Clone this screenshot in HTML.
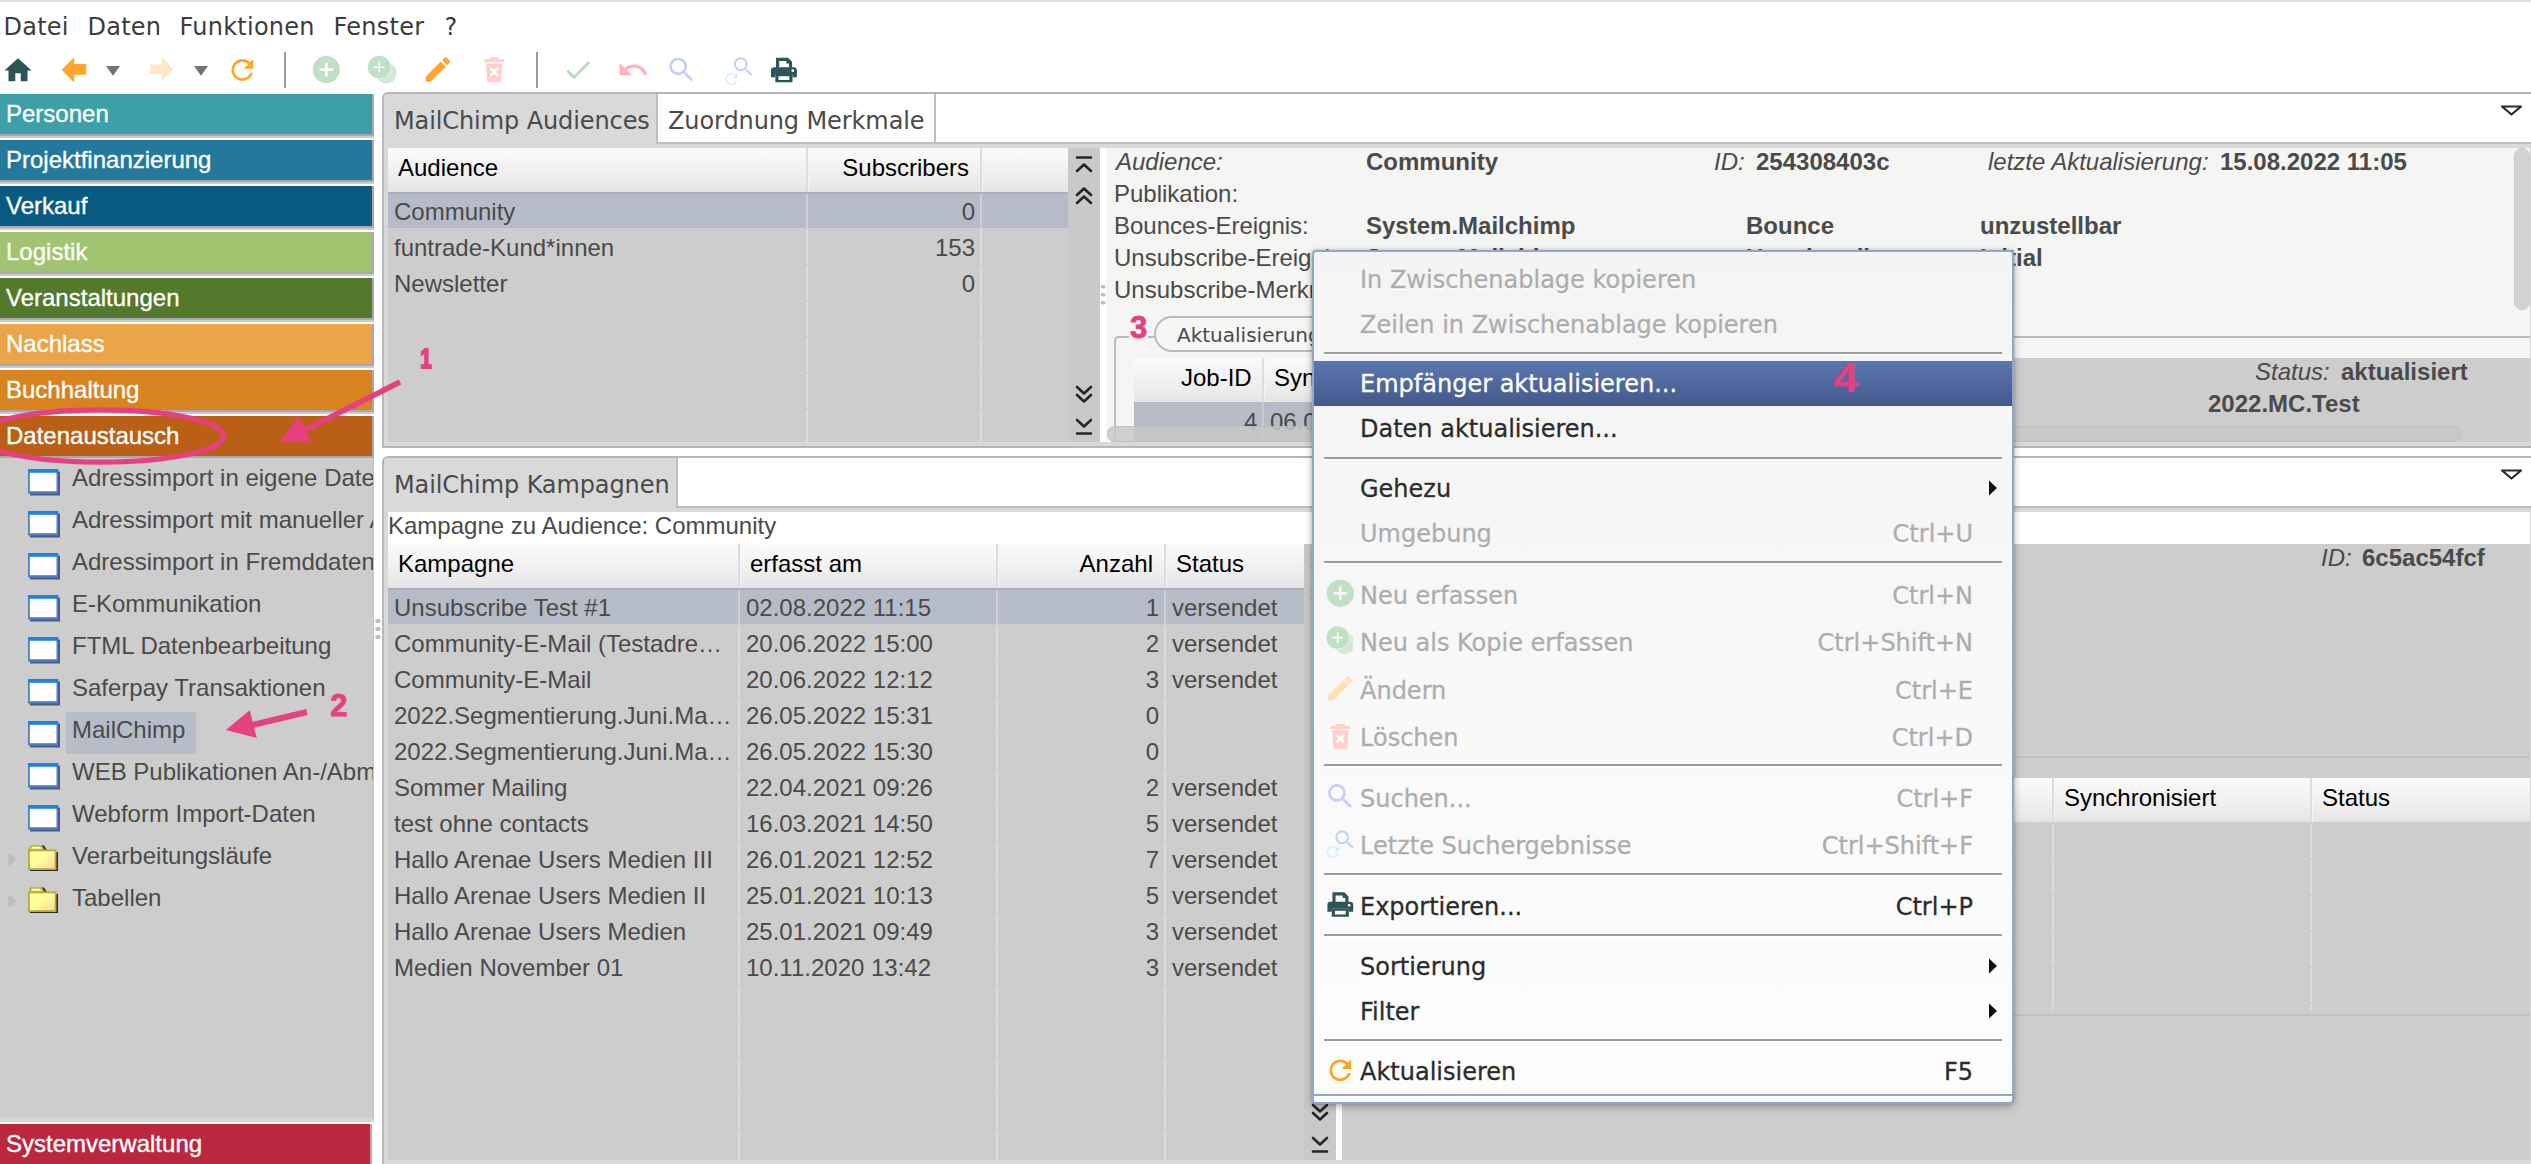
<!DOCTYPE html>
<html lang="de">
<head>
<meta charset="utf-8">
<title>MailChimp</title>
<style>
*{box-sizing:border-box;margin:0;padding:0}
html,body{width:2531px;height:1164px;overflow:hidden;background:#fff}
body{position:relative;font-family:"Liberation Sans",sans-serif;font-size:24px;color:#4a4a4a}
.abs{position:absolute}
.dj{font-family:"DejaVu Sans","Liberation Sans",sans-serif}
.t{position:absolute;white-space:nowrap;line-height:28px;height:28px}
#topline{left:0;top:0;width:2531px;height:2px;background:#dddee1}
.menu{top:13px;font-size:24px;color:#3c3c3c;letter-spacing:.25px;margin-left:-.5px}
/* sidebar */
#side{left:0;top:94px;width:374px;height:1070px;background:#fff}
.bar{position:absolute;left:0;width:374px;height:42px;border-right:2px solid #aaa8ab;border-bottom:2px solid #a9a8ab;box-shadow:0 2px 0 #cbcbcb}
.bar span{position:absolute;left:6px;top:6px;-webkit-text-stroke:.35px #fff;color:#fff;font-size:24px;line-height:28px;white-space:nowrap}
#tree{left:0;top:458px;width:374px;height:660px;background:#cdcdcd;overflow:hidden;border-right:1px solid #c3c3c3}
.ti{position:absolute;left:72px;font-size:24px;line-height:28px;color:#4a4a4a;white-space:nowrap}
.wi{position:absolute;left:28px;width:32px;height:26.5px}

/* panels */
.panel{position:absolute;background:#d9d9d9;border:2px solid #b6b6b6;border-right:none;border-radius:6px 0 0 0}
.tabrow{position:absolute;left:0;top:0;right:0;height:48px;background:#fff;border-bottom:2px solid #bdbdbd}
.tab{position:absolute;top:0;height:50px;font-family:"DejaVu Sans",sans-serif;font-size:24px;line-height:28px;color:#4a4a4a;white-space:nowrap;padding:13px 0 0 10px;letter-spacing:-.1px}
.tab.act{background:#d9d9d9;border-right:2px solid #bdbdbd;border-radius:4px 0 0 0}
.tab.in{background:#fff;border-right:2px solid #bdbdbd;height:48px}
.th{position:absolute;background:linear-gradient(#fbfbfb,#f1f1f1 50%,#e5e5e5);color:#000;height:44px}
.th span{position:absolute;top:6px;font-size:24px;line-height:28px;white-space:nowrap}
.th i{position:absolute;top:0;width:2px;height:44px;background:#dddddd;box-shadow:1px 0 0 #f4f4f4}
.tb{position:absolute;background:#cdcdcd;overflow:hidden}
.tb:after{content:"";position:absolute;left:0;right:0;top:0;height:2px;background:linear-gradient(rgba(0,0,0,.1),rgba(0,0,0,.03))}
.row{position:absolute;left:0;right:0;height:36px}
.row.sel{background:#b6bcc7}
.row span{position:absolute;top:6px;font-size:24px;line-height:28px;white-space:nowrap;color:#4a4a4a}
.vl{position:absolute;top:0;bottom:0;width:2px;background:repeating-linear-gradient(transparent 0,transparent 2px,rgba(255,255,255,.3) 2px,rgba(255,255,255,.3) 36px)}
.nav{position:absolute;background:#c9c9c9;width:32px}
.lbl{position:absolute;font-size:24px;line-height:28px;white-space:nowrap;color:#4a4a4a}
.lbl.i{font-style:italic}
.lbl.b{font-weight:bold}

/* context menu */
#cm{position:absolute;left:1312px;top:250px;width:702px;height:854px;border:2px solid #91a6c8;border-radius:4px 4px 5px 5px;background:linear-gradient(#f4f4f4,#f7f7f7 40%,#fdfdfd);box-shadow:0 3px 8px rgba(0,0,0,.28),0 0 3px rgba(0,0,0,.2);font-family:"DejaVu Sans",sans-serif;font-size:24px;-webkit-text-stroke:.3px}
#cm .mi{position:absolute;left:46px;line-height:28px;height:28px;white-space:nowrap;color:#2c2c2c;text-shadow:0 2px 0 #fff}
#cm .mi.d{color:#adadad}
#cm .sc{position:absolute;right:39px;line-height:28px;height:28px;white-space:nowrap;color:#2c2c2c;text-shadow:0 2px 0 #fff}
#cm .sc.d{color:#adadad}
#cm .sep{position:absolute;left:10px;width:678px;height:2px;background:#9c9c9c;box-shadow:0 2px 0 #fff}
#cm .hl{position:absolute;left:0;width:698px;top:109px;height:45px;background:linear-gradient(#5b76ae,#50689f 50%,#44598c)}
#cm .ar{position:absolute;left:673.5px;width:10px;height:16px}
#cm .ic{position:absolute;left:9.7px;width:32.6px;height:32.6px;margin-top:1px}
</style>
</head>
<body>
<svg width="0" height="0" style="position:absolute"><defs>
<symbol id="i-add" viewBox="0 0 24 24"><path d="M12 2C6.48 2 2 6.48 2 12s4.48 10 10 10 10-4.48 10-10S17.52 2 12 2zm5 11h-4v4h-2v-4H7v-2h4V7h2v4h4v2z"/></symbol>
<symbol id="i-edit" viewBox="0 0 24 24"><path d="M3 17.25V21h3.75L17.81 9.94l-3.75-3.75L3 17.25zM20.71 7.04c.39-.39.39-1.02 0-1.41l-2.34-2.34c-.39-.39-1.02-.39-1.41 0l-1.83 1.83 3.75 3.75 1.83-1.83z"/></symbol>
<symbol id="i-search" viewBox="0 0 24 24"><path d="M15.5 14h-.79l-.28-.27C15.41 12.59 16 11.11 16 9.5 16 5.91 13.09 3 9.5 3S3 5.91 3 9.5 5.91 16 9.5 16c1.61 0 3.09-.59 4.23-1.57l.27.28v.79l5 4.99L20.49 19l-4.99-5zm-6 0C7.01 14 5 11.99 5 9.5S7.01 5 9.5 5 14 7.01 14 9.5 11.99 14 9.5 14z"/></symbol>
<symbol id="i-refresh" viewBox="0 0 24 24"><path d="M17.65 6.35C16.2 4.9 14.21 4 12 4c-4.42 0-7.99 3.58-7.99 8s3.57 8 7.99 8c3.73 0 6.84-2.55 7.73-6h-2.08c-.82 2.33-3.04 4-5.65 4-3.31 0-6-2.69-6-6s2.69-6 6-6c1.66 0 3.14.69 4.22 1.78L13 11h7V4l-2.35 2.35z"/></symbol>
<symbol id="i-addcopy" viewBox="0 0 24 24" style="overflow:visible"><circle cx="17.500" cy="14.500" r="7.700" fill="#d3e8d5"/><circle cx="12.300" cy="10.050" r="8.750" fill="#eef6ef"/><circle cx="12.300" cy="10.050" r="8.250" fill="#c0dfc3"/><path d="M12.300 6.100v7.900M8.350 10.050h7.900" stroke="#fff" stroke-width="1.150" fill="none"/></symbol>
<symbol id="i-trash" viewBox="0 0 24 24"><path d="M9.2 3.6h5.6l.9 1.5h3.6v2.2H4.7V5.100h3.600zM5.800 8.300h12.400l-.9 12.300c-.06.8-.7 1.400-1.500 1.400H8.200c-.8 0-1.440-.6-1.500-1.400z" fill="#ffd0cc"/><path d="M9.300 11.700l5.400 5.400M14.700 11.700l-5.400 5.400" stroke="#fff" stroke-width="1.900" fill="none"/></symbol>
<symbol id="i-search2" viewBox="0 0 24 24"><path transform="translate(6 0.100) scale(0.78)" d="M15.5 14h-.79l-.28-.27C15.41 12.59 16 11.11 16 9.5 16 5.91 13.09 3 9.5 3S3 5.91 3 9.5 5.91 16 9.5 16c1.61 0 3.09-.59 4.23-1.57l.27.28v.79l5 4.99L20.49 19l-4.99-5zm-6 0C7.01 14 5 11.99 5 9.5S7.01 5 9.5 5 14 7.01 14 9.5 11.99 14 9.5 14z" fill="#c5d0f8"/><path transform="translate(-0.200 11.700) scale(0.56)" d="M17.65 6.35C16.2 4.9 14.21 4 12 4c-4.42 0-7.99 3.58-7.99 8s3.57 8 7.99 8c3.73 0 6.84-2.55 7.73-6h-2.08c-.82 2.33-3.04 4-5.65 4-3.31 0-6-2.69-6-6s2.69-6 6-6c1.66 0 3.14.69 4.22 1.78L13 11h7V4l-2.35 2.35z" fill="#d4eef7"/></symbol>
<symbol id="i-print" viewBox="0 0 24 24"><path d="M6.200 3.200h8.800l3 3v4.300h-2.300V7.400h-1.900V5.500H8.500v5H6.200z"/><path d="M4.500 10.200h15c1.100 0 2 .9 2 2v5.300h-3.200v-2.300H5.700v2.300H2.500v-5.300c0-1.100.9-2 2-2z"/><path d="M5.700 15.200h12.600v6H5.700zm2.300 1.600v2.700h8v-2.700z"/><circle cx="18.500" cy="12.700" r="1" fill="#fff"/></symbol>
<linearGradient id="fg" x1="0" y1="0" x2="1" y2="1"><stop offset="0" stop-color="#ffff9c"/><stop offset=".45" stop-color="#ffff9c"/><stop offset="1" stop-color="#ffd29a"/></linearGradient>
</defs></svg>
<div id="topline" class="abs"></div>
<!-- MENUBAR -->
<div class="t dj menu" style="left:4px">Datei</div>
<div class="t dj menu" style="left:88px">Daten</div>
<div class="t dj menu" style="left:180px">Funktionen</div>
<div class="t dj menu" style="left:334px">Fenster</div>
<div class="t dj menu" style="left:445px">?</div>
<!-- TOOLBAR -->
<svg class="abs" id="toolbar" style="left:0;top:48px" width="830" height="44" viewBox="0 48 830 44">
<path transform="translate(1.68 54.16) scale(1.360)" d="M10 20v-6h4v6h5v-8h3L12 3 2 12h3v8z" fill="#2d5456"/>
<path d="M62.200 69.700L73.800 58V64.600H85.800V74.200H73.800V81.500Z" fill="#ffa62b" stroke="#ffa62b" stroke-width="1" stroke-linejoin="round"/>
<path d="M106 66H120L113 75.800Z" fill="#747474"/>
<path d="M172.800 69.200L162.500 58.600V65H150.600V73.400H162.500V79.800Z" fill="#ffe6c8" stroke="#ffe6c8" stroke-width="1" stroke-linejoin="round"/>
<path d="M194 66H208L201 75.800Z" fill="#747474"/>
<path transform="translate(226.02 53.68) scale(1.360)" d="M17.65 6.35C16.2 4.9 14.21 4 12 4c-4.42 0-7.99 3.58-7.99 8s3.57 8 7.99 8c3.73 0 6.84-2.55 7.73-6h-2.08c-.82 2.33-3.04 4-5.65 4-3.31 0-6-2.69-6-6s2.69-6 6-6c1.66 0 3.14.69 4.22 1.78L13 11h7V4l-2.35 2.35z" fill="#ffa62b"/>
<rect x="284" y="52" width="2" height="36" fill="#9a9aa2"/>
<path transform="translate(309.98 53.28) scale(1.360)" d="M12 2C6.48 2 2 6.48 2 12s4.48 10 10 10 10-4.48 10-10S17.52 2 12 2zm5 11h-4v4h-2v-4H7v-2h4V7h2v4h4v2z" fill="#c0dfc3"/>
<use href="#i-addcopy" x="362.500" y="53.500" width="32.640" height="32.640"/>
<path transform="translate(421.58 53.18) scale(1.360)" d="M3 17.25V21h3.75L17.81 9.94l-3.75-3.75L3 17.25zM20.71 7.04c.39-.39.39-1.02 0-1.41l-2.34-2.34c-.39-.39-1.02-.39-1.41 0l-1.83 1.83 3.75 3.75 1.83-1.83z" fill="#ffa62b"/>
<use href="#i-trash" x="477.800" y="52.300" width="32.640" height="32.640"/>
<rect x="536" y="52" width="2" height="36" fill="#9a9aa2"/>
<path transform="translate(561.81 53.47) scale(1.360)" d="M9 16.17L4.83 12l-1.42 1.41L9 19 21 7l-1.41-1.41z" fill="#b5dcb5"/>
<path transform="translate(616.80 53.52) scale(1.360)" d="M12.5 8c-2.65 0-5.05.99-6.9 2.6L2 7v9h9l-3.62-3.62c1.39-1.16 3.16-1.88 5.12-1.88 3.54 0 6.55 2.31 7.6 5.5l2.37-.78C21.08 11.03 17.15 8 12.5 8z" fill="#ffb3ba"/>
<path transform="translate(665.22 53.40) scale(1.360)" d="M15.5 14h-.79l-.28-.27C15.41 12.59 16 11.11 16 9.5 16 5.91 13.09 3 9.5 3S3 5.91 3 9.5 5.91 16 9.5 16c1.61 0 3.09-.59 4.23-1.57l.27.28v.79l5 4.99L20.49 19l-4.99-5zm-6 0C7.01 14 5 11.99 5 9.5S7.01 5 9.5 5 14 7.01 14 9.5 11.99 14 9.5 14z" fill="#c5d0f8"/>
<use href="#i-search2" x="722.500" y="54" width="32.640" height="32.640"/>
<use href="#i-print" x="767.600" y="53.400" width="32.640" height="32.640" fill="#2d5456"/>
</svg>
<!-- SIDEBAR -->
<div id="side" class="abs">
  <div class="bar" style="top:0;background:#3da0a8"><span>Personen</span></div>
  <div class="bar" style="top:46px;background:#24789c"><span>Projektfinanzierung</span></div>
  <div class="bar" style="top:92px;background:#095a82"><span>Verkauf</span></div>
  <div class="bar" style="top:138px;background:#a0c46f"><span>Logistik</span></div>
  <div class="bar" style="top:184px;background:#54782c"><span>Veranstaltungen</span></div>
  <div class="bar" style="top:230px;background:#eba548"><span>Nachlass</span></div>
  <div class="bar" style="top:276px;background:#d88220"><span>Buchhaltung</span></div>
  <div class="bar" style="top:322px;background:#b95f16"><span>Datenaustausch</span></div>
</div>
<div id="tree" class="abs">
<svg class="wi" style="top:11px" viewBox="0 0 32 26.500"><rect x="2" y="2.500" width="30" height="24" fill="#4a5c84"/><rect x="0" y="0" width="30.200" height="24.600" fill="#4f7ec8"/><rect x="0" y="0" width="30.200" height="3.800" fill="#1e80e8"/><rect x="1.800" y="3.800" width="26.700" height="18.400" fill="#fff"/></svg>
<div class="ti" style="top:6px">Adressimport in eigene Daten</div>
<svg class="wi" style="top:53px" viewBox="0 0 32 26.500"><rect x="2" y="2.500" width="30" height="24" fill="#4a5c84"/><rect x="0" y="0" width="30.200" height="24.600" fill="#4f7ec8"/><rect x="0" y="0" width="30.200" height="3.800" fill="#1e80e8"/><rect x="1.800" y="3.800" width="26.700" height="18.400" fill="#fff"/></svg>
<div class="ti" style="top:48px">Adressimport mit manueller Adresszuordnung</div>
<svg class="wi" style="top:95px" viewBox="0 0 32 26.500"><rect x="2" y="2.500" width="30" height="24" fill="#4a5c84"/><rect x="0" y="0" width="30.200" height="24.600" fill="#4f7ec8"/><rect x="0" y="0" width="30.200" height="3.800" fill="#1e80e8"/><rect x="1.800" y="3.800" width="26.700" height="18.400" fill="#fff"/></svg>
<div class="ti" style="top:90px">Adressimport in Fremddaten</div>
<svg class="wi" style="top:137px" viewBox="0 0 32 26.500"><rect x="2" y="2.500" width="30" height="24" fill="#4a5c84"/><rect x="0" y="0" width="30.200" height="24.600" fill="#4f7ec8"/><rect x="0" y="0" width="30.200" height="3.800" fill="#1e80e8"/><rect x="1.800" y="3.800" width="26.700" height="18.400" fill="#fff"/></svg>
<div class="ti" style="top:132px">E-Kommunikation</div>
<svg class="wi" style="top:179px" viewBox="0 0 32 26.500"><rect x="2" y="2.500" width="30" height="24" fill="#4a5c84"/><rect x="0" y="0" width="30.200" height="24.600" fill="#4f7ec8"/><rect x="0" y="0" width="30.200" height="3.800" fill="#1e80e8"/><rect x="1.800" y="3.800" width="26.700" height="18.400" fill="#fff"/></svg>
<div class="ti" style="top:174px">FTML Datenbearbeitung</div>
<svg class="wi" style="top:221px" viewBox="0 0 32 26.500"><rect x="2" y="2.500" width="30" height="24" fill="#4a5c84"/><rect x="0" y="0" width="30.200" height="24.600" fill="#4f7ec8"/><rect x="0" y="0" width="30.200" height="3.800" fill="#1e80e8"/><rect x="1.800" y="3.800" width="26.700" height="18.400" fill="#fff"/></svg>
<div class="ti" style="top:216px">Saferpay Transaktionen</div>
<div class="abs" style="left:66px;top:254px;width:130px;height:42px;background:#b7bdc8"></div>
<svg class="wi" style="top:263px" viewBox="0 0 32 26.500"><rect x="2" y="2.500" width="30" height="24" fill="#4a5c84"/><rect x="0" y="0" width="30.200" height="24.600" fill="#4f7ec8"/><rect x="0" y="0" width="30.200" height="3.800" fill="#1e80e8"/><rect x="1.800" y="3.800" width="26.700" height="18.400" fill="#fff"/></svg>
<div class="ti" style="top:258px">MailChimp</div>
<svg class="wi" style="top:305px" viewBox="0 0 32 26.500"><rect x="2" y="2.500" width="30" height="24" fill="#4a5c84"/><rect x="0" y="0" width="30.200" height="24.600" fill="#4f7ec8"/><rect x="0" y="0" width="30.200" height="3.800" fill="#1e80e8"/><rect x="1.800" y="3.800" width="26.700" height="18.400" fill="#fff"/></svg>
<div class="ti" style="top:300px">WEB Publikationen An-/Abmeldungen</div>
<svg class="wi" style="top:347px" viewBox="0 0 32 26.500"><rect x="2" y="2.500" width="30" height="24" fill="#4a5c84"/><rect x="0" y="0" width="30.200" height="24.600" fill="#4f7ec8"/><rect x="0" y="0" width="30.200" height="3.800" fill="#1e80e8"/><rect x="1.800" y="3.800" width="26.700" height="18.400" fill="#fff"/></svg>
<div class="ti" style="top:342px">Webform Import-Daten</div>
<svg class="wi" style="top:386.6px;left:28px;width:30px;height:26.500px" viewBox="0 0 30 26.500"><path d="M2 7H30V26.500H2Z" fill="#2b2b1d"/><path d="M13.500 0.500L16 0.500L19 5.500H15.500Z" fill="#2b2b1d"/><path d="M1 5.500L3 1H13.500L16 5.500Z" fill="#e4dc6a" stroke="#b3ab3a" stroke-width="1.600"/><path d="M3.800 2.600H12.500" stroke="#fffde0" stroke-width="1.600"/><rect x="0.900" y="5.400" width="26.700" height="18.700" fill="url(#fg)" stroke="#b3ab3a" stroke-width="1.800"/></svg>
<svg class="abs" style="left:7.700px;top:393.7px" width="9" height="14.500" viewBox="0 0 9 14.500"><path d="M0.300 0.300L8.600 7.250L0.300 14.200Z" fill="#bcbcbc"/></svg>
<div class="ti" style="top:384px">Verarbeitungsläufe</div>
<svg class="wi" style="top:428.6px;left:28px;width:30px;height:26.500px" viewBox="0 0 30 26.500"><path d="M2 7H30V26.500H2Z" fill="#2b2b1d"/><path d="M13.500 0.500L16 0.500L19 5.500H15.500Z" fill="#2b2b1d"/><path d="M1 5.500L3 1H13.500L16 5.500Z" fill="#e4dc6a" stroke="#b3ab3a" stroke-width="1.600"/><path d="M3.800 2.600H12.500" stroke="#fffde0" stroke-width="1.600"/><rect x="0.900" y="5.400" width="26.700" height="18.700" fill="url(#fg)" stroke="#b3ab3a" stroke-width="1.800"/></svg>
<svg class="abs" style="left:7.700px;top:435.7px" width="9" height="14.500" viewBox="0 0 9 14.500"><path d="M0.300 0.300L8.600 7.250L0.300 14.200Z" fill="#bcbcbc"/></svg>
<div class="ti" style="top:426px">Tabellen</div>
</div>
<div class="abs" style="left:0;top:1118px;width:374px;height:4px;background:#d6d6d6"></div>
<div class="abs" style="left:0;top:1124px;width:372px;height:40px;background:#bc2740;border-right:2px solid #c9a0a8"><span style="position:absolute;left:6px;top:6px;color:#fff;-webkit-text-stroke:.35px #fff;font-size:24px;line-height:28px">Systemverwaltung</span></div>
<!-- MAIN -->

<!-- ===== TOP PANEL ===== -->
<div class="panel" style="left:382px;top:92px;width:2149px;height:356px"></div>
<div class="abs" style="left:600px;top:94px;width:1931px;height:48px;background:#fff"></div>
<div class="abs" style="left:384px;top:142px;width:2147px;height:2px;background:#bdbdbd"></div>
<div class="tab act abs" style="left:384px;top:94px;width:274px">MailChimp Audiences</div>
<div class="tab in abs" style="left:658px;top:94px;width:278px">Zuordnung Merkmale</div>
<svg class="abs" style="left:2499px;top:104.4px" width="26" height="14" viewBox="0 0 26 14"><path d="M3 2.5H22L12.5 10.5Z" fill="#fff" stroke="#2a2a2a" stroke-width="2.2" stroke-linejoin="round"/></svg>
<!-- audience table -->
<div class="th" style="left:388px;top:148px;width:680px">
  <span style="left:10px">Audience</span><i style="left:418px"></i>
  <span style="right:99px">Subscribers</span><i style="left:592px"></i>
</div>
<div class="tb" style="left:388px;top:192px;width:680px;height:250px">
  <div class="row sel" style="top:0"><span style="left:6px">Community</span><span style="right:93px">0</span></div>
  <div class="row" style="top:36px"><span style="left:6px">funtrade-Kund*innen</span><span style="right:93px">153</span></div>
  <div class="row" style="top:72px"><span style="left:6px">Newsletter</span><span style="right:93px">0</span></div>
  <div class="vl" style="left:418px"></div><div class="vl" style="left:592px"></div>
</div>
<div class="nav" style="left:1068px;top:148px;height:294px"></div>
<svg class="abs" style="left:1068px;top:148px" width="32" height="294" viewBox="0 0 32 294" fill="none" stroke="#262626" stroke-width="2.6" stroke-linecap="round" stroke-linejoin="round">
  <path d="M9 9.5H23M9 23L16 16.5L23 23"/>
  <path d="M9 47L16 40.5L23 47M9 55L16 48.5L23 55"/>
  <path d="M9 239L16 245.5L23 239M9 247L16 253.5L23 247"/>
  <path d="M9 272L16 278.5L23 272M9 285.5H23"/>
</svg>
<div class="abs" style="left:1100px;top:148px;width:6px;height:294px;background:#fff"></div>
<svg class="abs" style="left:1100px;top:283px" width="6" height="24" viewBox="0 0 6 24"><g fill="#bcbcbc"><rect x="0.800" y="1.900" width="4.600" height="3.600" rx="1.600"/><rect x="0.800" y="9.900" width="4.600" height="3.600" rx="1.600"/><rect x="0.800" y="17.900" width="4.600" height="3.600" rx="1.600"/></g></svg>
<!-- audience detail -->
<div class="abs" style="left:1106px;top:148px;width:1425px;height:294px;background:#f5f5f4"></div>
<div class="abs" style="left:1134px;top:358px;width:1397px;height:84px;background:#cdcdcd"></div>
<div class="lbl i" style="left:1116px;top:148px">Audience:</div>
<div class="lbl b" style="left:1366px;top:148px">Community</div>
<div class="lbl i" style="left:1714px;top:148px">ID:</div>
<div class="lbl b" style="left:1756px;top:148px">254308403c</div>
<div class="lbl i" style="left:1988px;top:148px">letzte Aktualisierung:</div>
<div class="lbl b" style="left:2220px;top:148px">15.08.2022 11:05</div>
<div class="lbl" style="left:1114px;top:180px">Publikation:</div>
<div class="lbl" style="left:1114px;top:212px">Bounces-Ereignis:</div>
<div class="lbl b" style="left:1366px;top:212px">System.Mailchimp</div>
<div class="lbl b" style="left:1746px;top:212px">Bounce</div>
<div class="lbl b" style="left:1980px;top:212px">unzustellbar</div>
<div class="lbl" style="left:1114px;top:244px">Unsubscribe-Ereignis:</div>
<div class="lbl b" style="left:1366px;top:244px">System.Mailchimp</div>
<div class="lbl b" style="left:1746px;top:244px">Unsubscribe</div>
<div class="lbl b" style="left:1980px;top:244px">Initial</div>
<div class="lbl" style="left:1114px;top:276px">Unsubscribe-Merkmal:</div>
<!-- fieldset -->
<div class="abs" style="left:1114px;top:336px;width:1417px;height:106px;border:2px solid #bcbcbc;border-right:none;border-bottom:none;border-radius:5px 0 0 0"></div>
<div class="abs" style="left:1129px;top:334px;width:19px;height:6px;background:#f5f5f4"></div>
<div class="abs dj" style="left:1154px;top:316px;width:300px;height:36px;border:2px solid #bcbcbc;border-radius:18px;background:#f6f6f5;font-size:20px;line-height:24px;padding:5px 0 0 21px;color:#4a4a4a;white-space:nowrap">Aktualisierung</div>
<div class="th" style="left:1134px;top:358px;width:400px">
  <span style="left:47px">Job-ID</span><i style="left:128px"></i>
  <span style="left:140px">Synchronisiert</span>
</div>
<div class="abs" style="left:1134px;top:402px;width:400px;height:40px;background:#b6bcc7"></div>
<div class="lbl" style="left:1244px;top:408px">4</div>
<div class="lbl" style="left:1270px;top:408px">06.08.2022</div>
<div class="abs" style="left:1262px;top:402px;width:2px;height:40px;background:#c6cad2"></div>
<div class="lbl i" style="left:2255px;top:358px">Status:</div>
<div class="lbl b" style="left:2341px;top:358px">aktualisiert</div>
<div class="lbl b" style="left:2208px;top:390px">2022.MC.Test</div>
<!-- scrollbars -->
<div class="abs" style="left:2514px;top:148px;width:16px;height:162px;border-radius:8px;background:#d3d3d3;border:1px solid #c8c8c8"></div>
<div class="abs" style="left:1107px;top:426px;width:1354px;height:16px;border-radius:8px;background:rgba(200,200,200,.82);border:1px solid rgba(180,180,180,.5)"></div>

<!-- ===== BOTTOM PANEL ===== -->
<div class="panel" style="left:382px;top:456px;width:2149px;height:720px"></div>
<div class="abs" style="left:600px;top:458px;width:1931px;height:48px;background:#fff"></div>
<div class="abs" style="left:384px;top:506px;width:2147px;height:2px;background:#bdbdbd"></div>
<div class="tab act abs" style="left:384px;top:458px;width:294px">MailChimp Kampagnen</div>
<svg class="abs" style="left:2499px;top:468.4px" width="26" height="14" viewBox="0 0 26 14"><path d="M3 2.5H22L12.5 10.5Z" fill="#fff" stroke="#2a2a2a" stroke-width="2.2" stroke-linejoin="round"/></svg>
<div class="abs" style="left:388px;top:512px;width:2143px;height:32px;background:#fff"></div>
<div class="lbl" style="left:388px;top:512px">Kampagne zu Audience: Community</div>
<div class="th" style="left:388px;top:544px;width:916px">
  <span style="left:10px">Kampagne</span><i style="left:350px"></i>
  <span style="left:362px">erfasst am</span><i style="left:608px"></i>
  <span style="right:151px">Anzahl</span><i style="left:776px"></i>
  <span style="left:788px">Status</span>
</div>
<div class="tb" style="left:388px;top:588px;width:916px;height:572px">
  <div class="row sel" style="top:0px"><span style="left:6px">Unsubscribe Test #1</span><span style="left:358px">02.08.2022 11:15</span><span style="right:145px">1</span><span style="left:784px">versendet</span></div>
  <div class="row" style="top:36px"><span style="left:6px">Community-E-Mail (Testadre…</span><span style="left:358px">20.06.2022 15:00</span><span style="right:145px">2</span><span style="left:784px">versendet</span></div>
  <div class="row" style="top:72px"><span style="left:6px">Community-E-Mail</span><span style="left:358px">20.06.2022 12:12</span><span style="right:145px">3</span><span style="left:784px">versendet</span></div>
  <div class="row" style="top:108px"><span style="left:6px">2022.Segmentierung.Juni.Ma…</span><span style="left:358px">26.05.2022 15:31</span><span style="right:145px">0</span><span style="left:784px"></span></div>
  <div class="row" style="top:144px"><span style="left:6px">2022.Segmentierung.Juni.Ma…</span><span style="left:358px">26.05.2022 15:30</span><span style="right:145px">0</span><span style="left:784px"></span></div>
  <div class="row" style="top:180px"><span style="left:6px">Sommer Mailing</span><span style="left:358px">22.04.2021 09:26</span><span style="right:145px">2</span><span style="left:784px">versendet</span></div>
  <div class="row" style="top:216px"><span style="left:6px">test ohne contacts</span><span style="left:358px">16.03.2021 14:50</span><span style="right:145px">5</span><span style="left:784px">versendet</span></div>
  <div class="row" style="top:252px"><span style="left:6px">Hallo Arenae Users Medien III</span><span style="left:358px">26.01.2021 12:52</span><span style="right:145px">7</span><span style="left:784px">versendet</span></div>
  <div class="row" style="top:288px"><span style="left:6px">Hallo Arenae Users Medien II</span><span style="left:358px">25.01.2021 10:13</span><span style="right:145px">5</span><span style="left:784px">versendet</span></div>
  <div class="row" style="top:324px"><span style="left:6px">Hallo Arenae Users Medien</span><span style="left:358px">25.01.2021 09:49</span><span style="right:145px">3</span><span style="left:784px">versendet</span></div>
  <div class="row" style="top:360px"><span style="left:6px">Medien November 01</span><span style="left:358px">10.11.2020 13:42</span><span style="right:145px">3</span><span style="left:784px">versendet</span></div>
  <div class="vl" style="left:350px"></div><div class="vl" style="left:608px"></div><div class="vl" style="left:776px"></div>
</div>
<div class="nav" style="left:1304px;top:544px;height:616px"></div>
<svg class="abs" style="left:1304px;top:544px" width="32" height="616" viewBox="0 0 32 616" fill="none" stroke="#262626" stroke-width="2.6" stroke-linecap="round" stroke-linejoin="round">
  <path d="M9 9.5H23M9 23L16 16.5L23 23"/>
  <path d="M9 47L16 40.5L23 47M9 55L16 48.5L23 55"/>
  <path d="M9 561L16 567.5L23 561M9 569L16 575.5L23 569"/>
  <path d="M9 594L16 600.5L23 594M9 607.5H23"/>
</svg>
<div class="abs" style="left:1336px;top:544px;width:6px;height:616px;background:#fff"></div>
<div class="abs" style="left:1342px;top:544px;width:1189px;height:616px;background:#cdcdcd"></div>
<div class="lbl i" style="left:2321px;top:544px">ID:</div>
<div class="lbl b" style="left:2362px;top:544px">6c5ac54fcf</div>
<div class="abs" style="left:1342px;top:756px;width:1189px;height:2px;background:#c0c0c0"></div>
<div class="th" style="left:1362px;top:778px;width:1169px">
  <i style="left:690px"></i><span style="left:702px">Synchronisiert</span><i style="left:948px"></i><span style="left:960px">Status</span>
</div>
<div class="abs" style="left:2052px;top:822px;width:2px;height:188px;background:repeating-linear-gradient(transparent 0,transparent 2px,rgba(255,255,255,.3) 2px,rgba(255,255,255,.3) 36px)"></div>
<div class="abs" style="left:2310px;top:822px;width:2px;height:188px;background:repeating-linear-gradient(transparent 0,transparent 2px,rgba(255,255,255,.3) 2px,rgba(255,255,255,.3) 36px)"></div>
<div class="abs" style="left:1342px;top:1014px;width:1189px;height:2px;background:#c0c0c0"></div>
<!-- splitter dots between sidebar and main -->
<svg class="abs" style="left:375px;top:617px" width="6" height="24" viewBox="0 0 6 24"><g fill="#bcbcbc"><rect x="0.400" y="2.100" width="5.200" height="3.800" rx="1.700"/><rect x="0.400" y="10.100" width="5.200" height="3.800" rx="1.700"/><rect x="0.400" y="18.100" width="5.200" height="3.800" rx="1.700"/></g></svg>
<div class="abs" style="left:2530px;top:144px;width:1px;height:302px;background:#d6d6d6"></div>
<div class="abs" style="left:2530px;top:508px;width:1px;height:656px;background:#d6d6d6"></div>
<div id="cm">
<div class="hl"></div>
<div class="sep" style="top:100px"></div>
<div class="sep" style="top:205px"></div>
<div class="sep" style="top:309px"></div>
<div class="sep" style="top:512px"></div>
<div class="sep" style="top:621px"></div>
<div class="sep" style="top:682px"></div>
<div class="sep" style="top:787px"></div>
<div class="mi d" style="top:14px">In Zwischenablage kopieren</div>
<div class="mi d" style="top:59px">Zeilen in Zwischenablage kopieren</div>
<div class="mi" style="top:118px;color:#fff;text-shadow:none">Empfänger aktualisieren...</div>
<div class="mi" style="top:163px">Daten aktualisieren...</div>
<div class="mi" style="top:223px">Gehezu</div><svg class="ar" style="top:228px" viewBox="0 0 10 16"><path d="M1 0.500L9 8L1 15.500Z" fill="#111"/></svg>
<div class="mi d" style="top:268px">Umgebung</div><div class="sc d" style="top:268px">Ctrl+U</div>
<div class="mi d" style="top:330px">Neu erfassen</div><div class="sc d" style="top:330px">Ctrl+N</div><svg class="ic" style="top:324px" fill="#c0dfc3"><use href="#i-add"/></svg>
<div class="mi d" style="top:377px">Neu als Kopie erfassen</div><div class="sc d" style="top:377px">Ctrl+Shift+N</div><svg class="ic" style="top:371px;margin-left:-3px"><use href="#i-addcopy"/></svg>
<div class="mi d" style="top:425px">Ändern</div><div class="sc d" style="top:425px">Ctrl+E</div><svg class="ic" style="top:419px" fill="#ffe0ae"><use href="#i-edit"/></svg>
<div class="mi d" style="top:472px">Löschen</div><div class="sc d" style="top:472px">Ctrl+D</div><svg class="ic" style="top:466px"><use href="#i-trash"/></svg>
<div class="mi d" style="top:533px">Suchen...</div><div class="sc d" style="top:533px">Ctrl+F</div><svg class="ic" style="top:527px" fill="#c5d0f8"><use href="#i-search"/></svg>
<div class="mi d" style="top:580px">Letzte Suchergebnisse</div><div class="sc d" style="top:580px">Ctrl+Shift+F</div><svg class="ic" style="top:574px"><use href="#i-search2"/></svg>
<div class="mi" style="top:641px">Exportieren...</div><div class="sc" style="top:641px">Ctrl+P</div><svg class="ic" style="top:635px" fill="#2d5456"><use href="#i-print"/></svg>
<div class="mi" style="top:701px">Sortierung</div><svg class="ar" style="top:706px" viewBox="0 0 10 16"><path d="M1 0.500L9 8L1 15.500Z" fill="#111"/></svg>
<div class="mi" style="top:746px">Filter</div><svg class="ar" style="top:751px" viewBox="0 0 10 16"><path d="M1 0.500L9 8L1 15.500Z" fill="#111"/></svg>
<div class="mi" style="top:806px">Aktualisieren</div><div class="sc" style="top:806px">F5</div><svg class="ic" style="top:800px;margin-top:2px;margin-left:.8px" fill="#f5a623"><use href="#i-refresh"/></svg>
<div style="position:absolute;left:0;right:0;bottom:6px;height:2px;background:#91a6c8"></div><div style="position:absolute;left:0;right:0;bottom:0;height:6px;background:#fff;border-radius:0 0 3px 3px"></div>
</div>
<svg class="abs" style="left:0;top:0;pointer-events:none" width="2531" height="1164" viewBox="0 0 2531 1164">
<g fill="#e5407f" stroke="none" style="font-family:'Liberation Sans',sans-serif;font-weight:bold" paint-order="stroke">
<ellipse cx="100.600" cy="436" rx="123.400" ry="26.100" fill="none" stroke="#e5407f" stroke-width="5.200"/>
<path d="M400 382L303 431" stroke="#e5407f" stroke-width="5.500" fill="none" stroke-linecap="butt"/>
<path d="M280 441.300L298.500 416.500L311.600 441.300Z"/>
<path d="M307 712L248 726" stroke="#e5407f" stroke-width="6" fill="none"/>
<path d="M225.800 730L249.800 710.300L256.700 738Z"/>
<text transform="translate(420.200 367.500) scale(.72 1)" font-size="28.500" stroke="#e5407f" stroke-width="2">1</text>
<text x="330.300" y="715.700" font-size="31" stroke="#e5407f" stroke-width=".8">2</text>
<text x="1130" y="338.400" font-size="31" stroke="#e5407f" stroke-width=".8">3</text>
<text x="1833" y="392" font-size="41" textLength="25.500" lengthAdjust="spacingAndGlyphs">4</text>
</g>
</svg>


</body>
</html>
